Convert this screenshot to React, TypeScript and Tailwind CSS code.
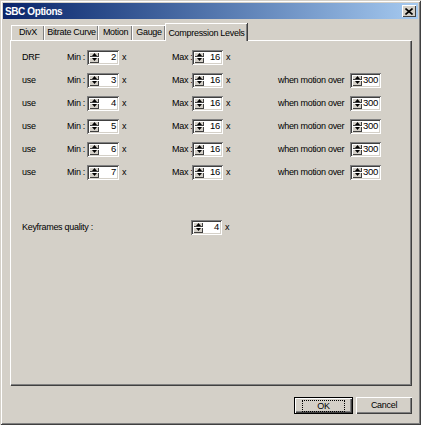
import React from "react";

const font = { fontFamily: '"Liberation Sans", Arial, sans-serif' };

const Arrow = ({ up }: { up?: boolean }) => (
  <svg width="5" height="3" viewBox="0 0 5 3" className="block">
    <path d={up ? "M2.5 0 L5 3 L0 3 Z" : "M0 0 L5 0 L2.5 3 Z"} fill="#000" />
  </svg>
);

const Spin = ({ value, width }: { value: string; width: string }) => (
  <div
    className={`flex h-[15px] shrink-0 bg-white py-[2px] pl-[2px] pr-[1px] shadow-[inset_1px_1px_0_#808080,inset_-1px_-1px_0_#fff,inset_2px_2px_0_#404040,inset_-2px_-2px_0_#d4d0c8] ${width}`}
  >
    <div className="flex w-[10px] shrink-0 flex-col">
      <div className="flex h-[5px] items-center justify-center bg-[#d4d0c8] shadow-[inset_1px_1px_0_#fff,inset_-1px_-1px_0_#404040]">
        <Arrow up />
      </div>
      <div className="flex h-[6px] items-center justify-center bg-[#d4d0c8] shadow-[inset_1px_1px_0_#fff,inset_-1px_-1px_0_#404040]">
        <Arrow />
      </div>
    </div>
    <div className="flex flex-1 items-center justify-end pr-[2px] text-[9.5px] leading-none">{value}</div>
  </div>
);

const Row = ({ label, min, motion }: { label: string; min: string; motion?: boolean }) => (
  <div className="flex h-[16px] items-center whitespace-nowrap leading-none">
    <span className="w-[45px] shrink-0">{label}</span>
    <span className="w-[20px] shrink-0">Min :</span>
    <Spin value={min} width="w-[32px]" />
    <span className="w-[53px] shrink-0 pl-[3px]">x</span>
    <span className="w-[20px] shrink-0">Max :</span>
    <Spin value="16" width="w-[31px]" />
    <span className="w-[55px] shrink-0 pl-[3px]">x</span>
    {motion && (
      <>
        <span className="w-[72px] shrink-0">when motion over</span>
        <Spin value="300" width="w-[31px]" />
      </>
    )}
  </div>
);

const tabs = [
  { name: "DivX", w: "w-[33px]" },
  { name: "Bitrate Curve", w: "w-[54px]" },
  { name: "Motion", w: "w-[34px]" },
  { name: "Gauge", w: "w-[33px]" },
];

export default function App() {
  return (
    <div
      style={font}
      className="flex h-[425px] w-[421px] flex-col bg-[#d4d0c8] px-[3px] pb-[3px] pt-[3px] text-[9px] tracking-[-0.3px] text-black shadow-[inset_1px_1px_0_#d4d0c8,inset_-1px_-1px_0_#404040,inset_2px_2px_0_#fff,inset_-2px_-2px_0_#808080]"
    >
      {/* title bar */}
      <div className="flex h-[16px] shrink-0 items-center justify-between bg-gradient-to-r from-[#0a246a] to-[#a6caf0] pl-[2px] pr-[2px]">
        <span className="text-[10px] font-bold tracking-[-0.4px] text-white">SBC Options</span>
        <div className="flex h-[12px] w-[14px] items-center justify-center bg-[#d4d0c8] shadow-[inset_1px_1px_0_#fff,inset_-1px_-1px_0_#404040]">
          <svg width="8" height="7" viewBox="0 0 8 7">
            <path d="M0.5 0.5 L7.5 6.5 M7.5 0.5 L0.5 6.5" stroke="#000" strokeWidth="1.6" />
          </svg>
        </div>
      </div>

      {/* tabs */}
      <div className="ml-[8px] mt-[2px] flex h-[19px] shrink-0 items-end whitespace-nowrap">
        {tabs.map((t) => (
          <div
            key={t.name}
            className={`flex h-[15px] shrink-0 items-center justify-center border-l border-t border-white shadow-[inset_-1px_0_0_#808080,1px_0_0_#404040] ${t.w}`}
          >
            {t.name}
          </div>
        ))}
        <div className="relative z-10 -mb-[1px] flex h-[18px] w-[82px] shrink-0 items-start justify-center border-l border-t border-white bg-[#d4d0c8] pt-[3px] shadow-[inset_-1px_0_0_#808080,1px_0_0_#404040]">
          Compression Levels
        </div>
      </div>

      {/* panel */}
      <div className="mx-[7px] flex h-[345px] shrink-0 flex-col border-l border-t border-white pl-[11px] pt-[8px] shadow-[inset_-1px_-1px_0_#808080,1px_1px_0_#404040]">
        <div className="flex flex-col gap-[7px]">
          <Row label="DRF" min="2" />
          <Row label="use" min="3" motion />
          <Row label="use" min="4" motion />
          <Row label="use" min="5" motion />
          <Row label="use" min="6" motion />
          <Row label="use" min="7" motion />
        </div>
        <div className="mt-[39px] flex h-[16px] items-center whitespace-nowrap leading-none">
          <span className="w-[169px] shrink-0">Keyframes quality :</span>
          <Spin value="4" width="w-[31px]" />
          <span className="pl-[3px]">x</span>
        </div>
      </div>

      {/* buttons */}
      <div className="mt-[12px] flex justify-end gap-[3px] pr-[6px]">
        <button className="flex h-[17px] w-[59px] items-center justify-center bg-[#d4d0c8] shadow-[inset_1px_1px_0_#000,inset_-1px_-1px_0_#000,inset_2px_2px_0_#fff,inset_-2px_-2px_0_#404040,inset_-3px_-3px_0_#808080]">
          <span className="border border-dotted border-black px-[14px] leading-[10px]">OK</span>
        </button>
        <button className="flex h-[17px] w-[56px] items-center justify-center bg-[#d4d0c8] shadow-[inset_1px_1px_0_#fff,inset_-1px_-1px_0_#404040,inset_-2px_-2px_0_#808080]">
          Cancel
        </button>
      </div>
    </div>
  );
}
